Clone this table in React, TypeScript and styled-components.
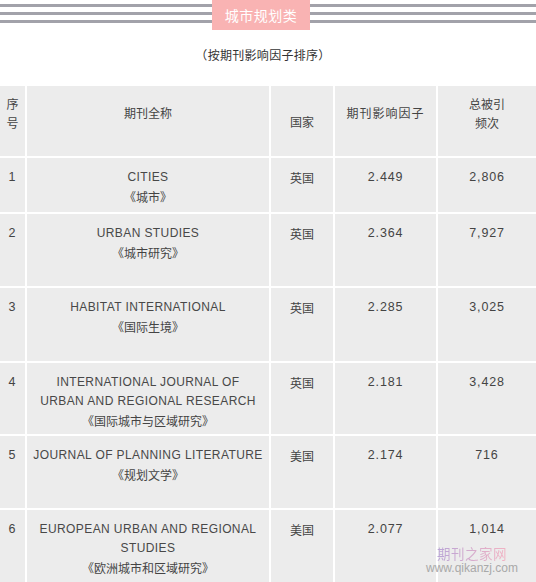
import React from "react";
import styled, { createGlobalStyle } from "styled-components";

const Global = createGlobalStyle`
  html, body { margin: 0; padding: 0; background: #fff; }
  body {
    font-family: "Noto Sans CJK SC", "Liberation Sans", sans-serif;
    color: #444;
    overflow: hidden;
  }
`;

const Page = styled.div`
  position: relative;
  width: 536px;
  height: 582px;
  overflow: hidden;
`;

const Banner = styled.div`
  position: relative;
  height: 30px;
  display: flex;
  justify-content: center;
`;

const Stripes = styled.div`
  position: absolute;
  left: 0;
  right: 0;
  top: 4px;
  display: flex;
  flex-direction: column;
  gap: 5px;
`;

const Stripe = styled.div`
  height: 3px;
  background: #a2a2aa;
`;

const Badge = styled.div`
  position: relative;
  width: 98px;
  height: 30px;
  margin-right: 14px;
  background: #f9b3b3;
  color: #fff;
  font-size: 14px;
  font-weight: 400;
  display: flex;
  align-items: center;
  justify-content: center;
  letter-spacing: 0.5px;
`;

const Subtitle = styled.div`
  text-align: center;
  font-size: 12px;
  color: #333;
  padding: 16px 10px 0 0;
  height: 56px;
  line-height: 18px;
  box-sizing: border-box;
  letter-spacing: 0.3px;
`;

const Table = styled.div`
  display: grid;
  grid-template-columns: 25px 242px 62px 101px 1fr;
  gap: 2px;
  background: #fff;
`;

const Cell = styled.div<{ $h: number; $pt?: number; $mid?: boolean }>`
  background: #ececec;
  height: ${(p) => p.$h}px;
  box-sizing: border-box;
  padding-top: ${(p) => (p.$pt !== undefined ? p.$pt : 10)}px;
  display: flex;
  flex-direction: column;
  align-items: center;
  justify-content: ${(p) => (p.$mid ? "center" : "flex-start")};
  text-align: center;
  font-size: 12px;
  line-height: 19px;
  color: #444;
`;

const Latin = styled.span`
  display: block;
  height: 19px;
  line-height: 19px;
  font-family: "Liberation Sans", "Noto Sans CJK SC", sans-serif;
  font-size: 12px;
  letter-spacing: 0.4px;
  color: #484848;
  white-space: nowrap;
`;

const Num = styled.span`
  display: block;
  height: 19px;
  line-height: 19px;
  font-family: "Liberation Sans", sans-serif;
  font-size: 12.5px;
  letter-spacing: 0.8px;
  color: #444;
`;

const Zh = styled.span<{ $wide?: boolean }>`
  display: block;
  height: 19px;
  line-height: 19px;
  font-size: 12px;
  letter-spacing: ${(p) => (p.$wide ? "1px" : "0")};
  color: #444;
  white-space: nowrap;
`;

const Watermark = styled.div`
  position: absolute;
  right: 18px;
  bottom: 7px;
  display: flex;
  flex-direction: column;
  align-items: center;
  gap: 1px;
`;

const WmTitle = styled.span`
  display: block;
  height: 15px;
  line-height: 15px;
  font-size: 13.5px;
  letter-spacing: 0.5px;
  background: linear-gradient(90deg, #b9a3d6, #f2b3c3);
  -webkit-background-clip: text;
  background-clip: text;
  color: transparent;
`;

const WmUrl = styled.span`
  display: block;
  height: 13px;
  line-height: 13px;
  font-family: "Liberation Sans", sans-serif;
  font-size: 12px;
  color: #a9a9a9;
`;

type Row = {
  no: string;
  en: string[];
  zh: string;
  country: string;
  factor: string;
  cites: string;
  h: number;
};

const rows: Row[] = [
  { no: "1", en: ["CITIES"], zh: "《城市》", country: "英国", factor: "2.449", cites: "2,806", h: 54 },
  { no: "2", en: ["URBAN STUDIES"], zh: "《城市研究》", country: "英国", factor: "2.364", cites: "7,927", h: 72 },
  { no: "3", en: ["HABITAT INTERNATIONAL"], zh: "《国际生境》", country: "英国", factor: "2.285", cites: "3,025", h: 73 },
  {
    no: "4",
    en: ["INTERNATIONAL JOURNAL OF", "URBAN AND REGIONAL RESEARCH"],
    zh: "《国际城市与区域研究》",
    country: "英国",
    factor: "2.181",
    cites: "3,428",
    h: 71,
  },
  { no: "5", en: ["JOURNAL OF PLANNING LITERATURE"], zh: "《规划文学》", country: "美国", factor: "2.174", cites: "716", h: 72 },
  {
    no: "6",
    en: ["EUROPEAN URBAN AND REGIONAL", "STUDIES"],
    zh: "《欧洲城市和区域研究》",
    country: "美国",
    factor: "2.077",
    cites: "1,014",
    h: 80,
  },
];

export default function App() {
  return (
    <Page>
      <Global />
      <Banner>
        <Stripes>
          <Stripe />
          <Stripe />
          <Stripe />
        </Stripes>
        <Badge>城市规划类</Badge>
      </Banner>
      <Subtitle>（按期刊影响因子排序）</Subtitle>
      <Table>
        <Cell $h={70} $pt={8}>
          <Zh>序</Zh>
          <Zh>号</Zh>
        </Cell>
        <Cell $h={70} $pt={17}>
          <Zh>期刊全称</Zh>
        </Cell>
        <Cell $h={70} $pt={0} $mid>
          <Zh>国家</Zh>
        </Cell>
        <Cell $h={70} $pt={17}>
          <Zh $wide>期刊影响因子</Zh>
        </Cell>
        <Cell $h={70} $pt={8}>
          <Zh>总被引</Zh>
          <Zh>频次</Zh>
        </Cell>
        {rows.map((r) => (
          <React.Fragment key={r.no}>
            <Cell $h={r.h}>
              <Num>{r.no}</Num>
            </Cell>
            <Cell $h={r.h}>
              {r.en.map((l) => (
                <Latin key={l}>{l}</Latin>
              ))}
              <Zh>{r.zh}</Zh>
            </Cell>
            <Cell $h={r.h}>
              <Zh>{r.country}</Zh>
            </Cell>
            <Cell $h={r.h}>
              <Num>{r.factor}</Num>
            </Cell>
            <Cell $h={r.h}>
              <Num>{r.cites}</Num>
            </Cell>
          </React.Fragment>
        ))}
      </Table>
      <Watermark>
        <WmTitle>期刊之家网</WmTitle>
        <WmUrl>www.qikanzj.com</WmUrl>
      </Watermark>
    </Page>
  );
}
